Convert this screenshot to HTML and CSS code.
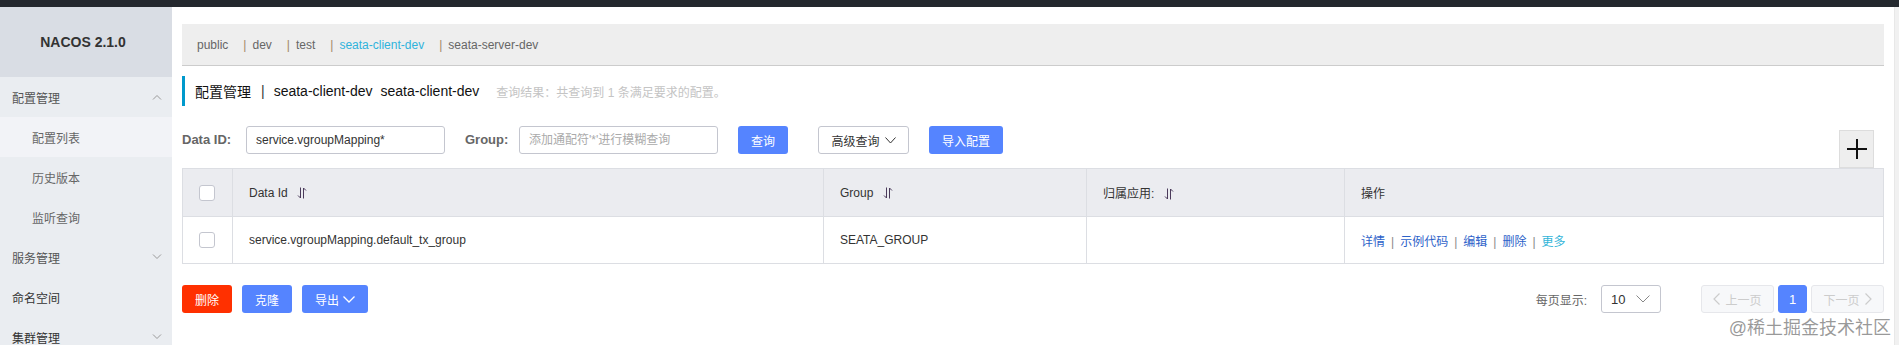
FILE: index.html
```html
<!DOCTYPE html>
<html>
 <head>
  <meta charset="utf-8">
  <link rel="stylesheet" href="styles.css">
 </head>
 <body>
  <div class="topbar"></div>
  <div class="frame">
   <aside class="side">
    <div class="logo">NACOS 2.1.0</div>
    <ul class="menu">
     <li class="item"><span>配置管理</span>
      <svg class="chev" width="10" height="6" viewBox="0 0 10 6"><polyline points="1,5.5 5,1.5 9,5.5" fill="none" stroke="#999" stroke-width="1"/></svg>
     </li>
     <li class="item sub active">配置列表</li>
     <li class="item sub">历史版本</li>
     <li class="item sub">监听查询</li>
     <li class="item"><span>服务管理</span>
      <svg class="chev" width="10" height="6" viewBox="0 0 10 6"><polyline points="1,0.5 5,4.5 9,0.5" fill="none" stroke="#999" stroke-width="1"/></svg>
     </li>
     <li class="item dark">命名空间</li>
     <li class="item dark"><span>集群管理</span>
      <svg class="chev" width="10" height="6" viewBox="0 0 10 6"><polyline points="1,0.5 5,4.5 9,0.5" fill="none" stroke="#999" stroke-width="1"/></svg>
     </li>
    </ul>
   </aside>

   <main class="main">
    <div class="ns-bar">
     <span class="ns">public</span>
     <span class="sep">|</span><span class="ns">dev</span>
     <span class="sep">|</span><span class="ns">test</span>
     <span class="sep">|</span><span class="ns current">seata-client-dev</span>
     <span class="sep">|</span><span class="ns">seata-server-dev</span>
    </div>

    <div class="title-row">
     <span class="title">配置管理</span>
     <span class="title-sep">|</span>
     <span class="title">seata-client-dev</span>
     <span class="title">seata-client-dev</span>
     <span class="result">查询结果：共查询到 1 条满足要求的配置。</span>
    </div>

    <div class="toolbar">
     <label class="lbl id">Data ID:</label>
     <div class="input">service.vgroupMapping*</div>
     <label class="lbl grp">Group:</label>
     <div class="input placeholder">添加通配符'*'进行模糊查询</div>
     <button class="btn primary">查询</button>
     <button class="btn normal adv">高级查询
      <svg width="11" height="7" viewBox="0 0 11 7"><polyline points="0.5,0.5 5.5,6 10.5,0.5" fill="none" stroke="#333" stroke-width="1"/></svg>
     </button>
     <button class="btn primary">导入配置</button>
     <div class="plus">
      <svg width="22" height="22" viewBox="0 0 22 22"><path d="M11 1v20M1 11h20" stroke="#111" stroke-width="2"/></svg>
     </div>
    </div>

    <table class="grid">
     <colgroup>
      <col style="width:50px"><col style="width:591px"><col style="width:263px"><col style="width:258px"><col>
     </colgroup>
     <thead>
      <tr>
       <th class="chk"><span class="box"></span></th>
       <th>Data Id <svg class="sort" width="10" height="12" viewBox="0 0 10 12"><path d="M3.5 0.5v10.5L1 8.5M6.5 11.5V1L9 3.5" fill="none" stroke="#4a3a5a" stroke-width="1"/></svg></th>
       <th>Group <svg class="sort" width="10" height="12" viewBox="0 0 10 12"><path d="M3.5 0.5v10.5L1 8.5M6.5 11.5V1L9 3.5" fill="none" stroke="#4a3a5a" stroke-width="1"/></svg></th>
       <th>归属应用: <svg class="sort" width="10" height="12" viewBox="0 0 10 12"><path d="M3.5 0.5v10.5L1 8.5M6.5 11.5V1L9 3.5" fill="none" stroke="#4a3a5a" stroke-width="1"/></svg></th>
       <th>操作</th>
      </tr>
     </thead>
     <tbody>
      <tr>
       <td class="chk"><span class="box"></span></td>
       <td>service.vgroupMapping.default_tx_group</td>
       <td>SEATA_GROUP</td>
       <td></td>
       <td class="ops"><a>详情</a><span class="bar">|</span><a>示例代码</a><span class="bar">|</span><a>编辑</a><span class="bar">|</span><a>删除</a><span class="bar">|</span><a class="more">更多</a></td>
      </tr>
     </tbody>
    </table>

    <div class="footer">
     <div class="batch">
      <button class="btn danger">删除</button>
      <button class="btn primary">克隆</button>
      <button class="btn primary export">导出
       <svg width="12" height="7" viewBox="0 0 12 7"><polyline points="0.5,0.5 6,6 11.5,0.5" fill="none" stroke="#fff" stroke-width="1.3"/></svg>
      </button>
     </div>
     <div class="pager">
      <span class="per">每页显示:</span>
      <div class="select">10
       <svg width="14" height="8" viewBox="0 0 14 8"><polyline points="0.5,0.5 7,7 13.5,0.5" fill="none" stroke="#888" stroke-width="1"/></svg>
      </div>
      <div class="pg prev">
       <svg width="7" height="12" viewBox="0 0 7 12"><polyline points="6.5,0.5 1,6 6.5,11.5" fill="none" stroke="#ccc" stroke-width="1.2"/></svg>上一页</div>
      <div class="pg num">1</div>
      <div class="pg next">下一页
       <svg width="7" height="12" viewBox="0 0 7 12"><polyline points="0.5,0.5 6,6 0.5,11.5" fill="none" stroke="#ccc" stroke-width="1.2"/></svg></div>
     </div>
    </div>
   </main>
   <div class="scroll"></div>
  </div>
  <div class="watermark">@稀土掘金技术社区</div>
 </body>
</html>
```

FILE: styles.css
```css
html, body {
  margin: 0;
  height: 345px;
  overflow: hidden;
}
body {
  font-family: "Liberation Sans", "Noto Sans CJK SC", sans-serif;
  font-size: 12px;
  color: #333;
  background: #fff;
  position: relative;
}
.topbar {
  height: 7px;
  background: #24282e;
}
.frame {
  display: flex;
  height: 338px;
}

/* 左侧菜单 */
.side {
  width: 172px;
  flex: none;
  background: #eaedf1;
}
.logo {
  height: 70px;
  background: #d9dde4;
  display: flex;
  align-items: center;
  justify-content: center;
  font-weight: bold;
  font-size: 14px;
  color: #333;
  padding-right: 6px;
}
.menu {
  list-style: none;
  margin: 0;
  padding: 0;
}
.item {
  height: 40px;
  display: flex;
  align-items: center;
  justify-content: space-between;
  padding: 0 10px 0 12px;
  color: #555;
}
.item.dark { color: #333; }
.item.sub {
  padding-left: 32px;
  color: #666;
}
.item.active { background: #f2f3f7; }

/* 主体 */
.main {
  flex: 1;
  padding: 17px 10px 0 10px;
  position: relative;
}
.scroll {
  width: 4px;
  flex: none;
  background: #f1f1f1;
  border-left: 1px solid #e8e8e8;
}
.ns-bar {
  height: 41px;
  background: #eeeeee;
  border-bottom: 1px solid #cccccc;
  display: flex;
  align-items: center;
  padding-left: 15px;
  color: #666;
}
.ns { margin-right: 15px; }
.sep {
  color: #a08866;
  margin-right: 6px;
}
.ns.current { color: #2fb3dc; }

.title-row {
  margin-top: 10px;
  height: 30px;
  border-left: 3px solid #0099cc;
  display: flex;
  align-items: center;
  padding-left: 10px;
}
.title {
  font-size: 14px;
  color: #111;
  margin-right: 8px;
}
.title-sep {
  font-size: 14px;
  margin: 0 9px 0 2px;
}
.result {
  color: #c4c4c4;
  margin-left: 9px;
}

.toolbar {
  margin-top: 20px;
  height: 42px;
  display: flex;
  align-items: flex-start;
}
.lbl {
  height: 28px;
  line-height: 28px;
  font-weight: bold;
  font-size: 13px;
  color: #666;
  white-space: nowrap;
}
.lbl.id { width: 50px; margin-right: 14px; }
.lbl.grp { width: 41px; margin-right: 13px; }
.input {
  width: 188px;
  height: 26px;
  line-height: 26px;
  border: 1px solid #c4c6cf;
  border-radius: 3px;
  padding: 0 0 0 9px;
  margin-right: 20px;
  color: #333;
}
.input.placeholder { color: #aaa; }
.btn {
  font-family: inherit;
  font-size: 12px;
  height: 28px;
  border-radius: 3px;
  border: 1px solid transparent;
  padding: 0 12px;
  margin-right: 20px;
  cursor: pointer;
}
.btn.primary {
  background: #5584ff;
  color: #fff;
}
.btn.danger {
  background: #ff3000;
  color: #fff;
}
.btn.normal {
  background: #fff;
  border-color: #c4c6cf;
  color: #333;
}
.adv {
  margin-left: 10px;
  width: 91px;
  display: flex;
  align-items: center;
  justify-content: center;
  gap: 5px;
  padding: 0;
}
.plus {
  margin-left: auto;
  margin-right: 10px;
  margin-top: 4px;
  width: 33px;
  height: 36px;
  background: #eeeeee;
  border: 1px solid #dddddd;
  display: flex;
  align-items: center;
  justify-content: center;
}

.grid {
  width: 100%;
  border-collapse: collapse;
  table-layout: fixed;
  border: 1px solid #dcdee3;
}
.grid th, .grid td {
  border: 1px solid #dcdee3;
  text-align: left;
  padding: 0 16px;
  font-weight: normal;
  color: #333;
}
.grid th {
  height: 47px;
  background: #ebecf0;
}
.grid td { height: 46px; }
.grid .chk { padding: 0 0 0 16px; }
.box {
  display: block;
  width: 14px;
  height: 14px;
  border: 1px solid #c4c6cf;
  border-radius: 3px;
  background: #fff;
}
.sort {
  vertical-align: -2px;
  margin-left: 6px;
}
.ops a { color: #2d62c9; }
.ops a.more { color: #33b5d9; }
.bar {
  color: #888;
  margin: 0 6px;
}

.footer {
  margin-top: 21px;
  display: flex;
  justify-content: space-between;
  align-items: center;
}
.batch { display: flex; }
.batch .btn { margin-right: 10px; width: 50px; padding: 0; }
.batch .export {
  width: 66px;
  display: flex;
  align-items: center;
  justify-content: center;
  gap: 4px;
}
.pager {
  display: flex;
  align-items: center;
}
.per {
  color: #666;
  margin-right: 14px;
}
.select {
  width: 39px;
  height: 26px;
  border: 1px solid #c4c6cf;
  border-radius: 3px;
  display: flex;
  align-items: center;
  justify-content: space-between;
  padding: 0 10px 0 9px;
  margin-right: 40px;
  color: #333;
  font-size: 13px;
}
.pg {
  height: 26px;
  border: 1px solid #e6e7eb;
  border-radius: 3px;
  background: #f7f8fa;
  color: #ccc;
  display: flex;
  align-items: center;
  justify-content: center;
  gap: 5px;
}
.pg.prev, .pg.next { width: 71px; }
.pg.num {
  width: 27px;
  background: #5584ff;
  border-color: #5584ff;
  color: #fff;
  margin: 0 4px;
  font-size: 13px;
}
.watermark {
  position: absolute;
  right: 8px;
  bottom: 6px;
  font-size: 18px;
  color: rgba(120, 120, 120, 0.75);
  letter-spacing: 0;
}
```
